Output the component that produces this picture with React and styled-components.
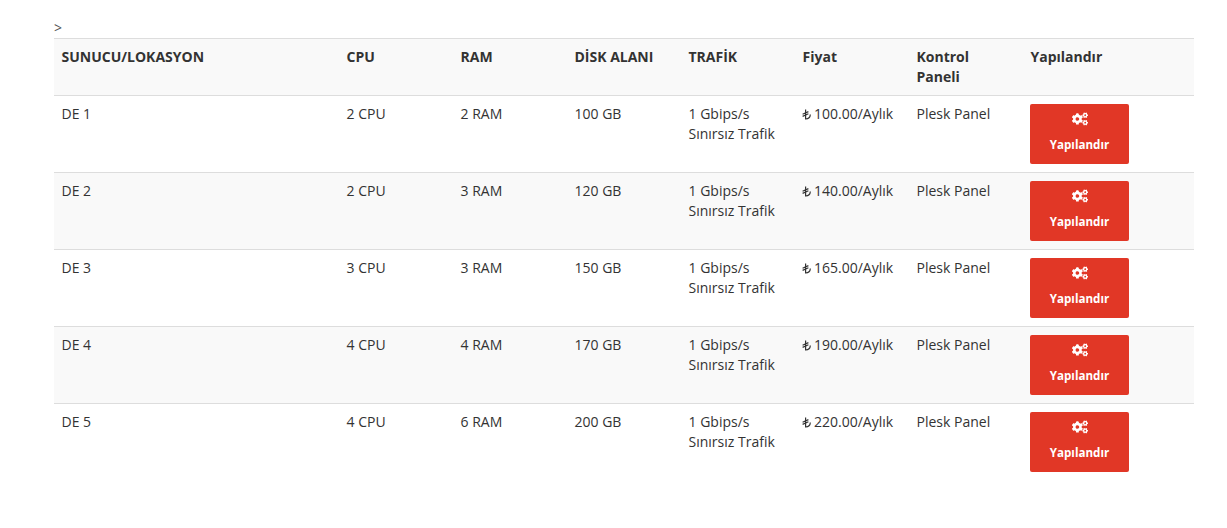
import React from 'react'
import styled, { createGlobalStyle } from 'styled-components'
import { FaCogs } from 'react-icons/fa'

const GlobalStyle = createGlobalStyle`
  html, body {
    margin: 0;
    background: #fff;
  }
  body {
    font-family: "Open Sans", "Liberation Sans", sans-serif;
    font-size: 14px;
    line-height: 20px;
    color: #333;
  }
`

const Page = styled.div`
  width: 1140px;
  margin-left: 54px;
  padding-top: 18px;
`

const Stray = styled.div`
  height: 20px;
  font-size: 14px;
  line-height: 20px;
  color: #555;
`

const Table = styled.table`
  width: 100%;
  table-layout: fixed;
  border-collapse: collapse;
  border-spacing: 0;
`

const HeadRow = styled.tr`
  background: #f9f9f9;
`

const Row = styled.tr`
  background: ${p => (p.$striped ? '#f9f9f9' : '#fff')};
`

const Th = styled.th`
  box-sizing: border-box;
  width: ${p => p.$width};
  padding: 8px 8px 8px 7.5px;
  border-top: 1px solid #ddd;
  text-align: left;
  vertical-align: top;
  font-weight: 700;
`

const Td = styled.td`
  box-sizing: border-box;
  padding: 8px 8px 8px 7.5px;
  border-top: 1px solid #ddd;
  vertical-align: top;
`

const LiraIcon = styled.svg`
  width: 9px;
  height: 11px;
  margin-left: -1px;
  margin-right: 3.5px;
  vertical-align: -1px;
  fill: none;
  stroke: currentColor;
  stroke-width: 1.2;
`

const ConfigButton = styled.a`
  display: flex;
  flex-direction: column;
  align-items: center;
  width: 99px;
  height: 60px;
  margin-left: -1px;
  padding: 8px 0 0 1px;
  box-sizing: border-box;
  background: #e13726;
  border-radius: 2px;
  color: #fff;
  font-size: 11.6px;
  font-weight: 700;
  line-height: 18px;
  text-decoration: none;
`

const CogsIcon = styled(FaCogs)`
  width: 16px;
  height: 14px;
  margin-bottom: 10px;
`

const columns = [
  { label: 'SUNUCU/LOKASYON', width: '25%' },
  { label: 'CPU', width: '10%' },
  { label: 'RAM', width: '10%' },
  { label: 'DİSK ALANI', width: '10%' },
  { label: 'TRAFİK', width: '10%' },
  { label: 'Fiyat', width: '10%' },
  { label: 'Kontrol Paneli', width: '10%' },
  { label: 'Yapılandır', width: '15%' },
]

const servers = [
  { name: 'DE 1', cpu: '2 CPU', ram: '2 RAM', disk: '100 GB', price: '100.00' },
  { name: 'DE 2', cpu: '2 CPU', ram: '3 RAM', disk: '120 GB', price: '140.00' },
  { name: 'DE 3', cpu: '3 CPU', ram: '3 RAM', disk: '150 GB', price: '165.00' },
  { name: 'DE 4', cpu: '4 CPU', ram: '4 RAM', disk: '170 GB', price: '190.00' },
  { name: 'DE 5', cpu: '4 CPU', ram: '6 RAM', disk: '200 GB', price: '220.00' },
]

const App = () => {
  return (
    <Page>
      <GlobalStyle />
      <Stray>&gt;</Stray>
      <Table>
        <thead>
          <HeadRow>
            {columns.map(col => (
              <Th key={col.label} $width={col.width}>{col.label}</Th>
            ))}
          </HeadRow>
        </thead>
        <tbody>
          {servers.map((server, i) => (
            <Row key={server.name} $striped={i % 2 === 1}>
              <Td>{server.name}</Td>
              <Td>{server.cpu}</Td>
              <Td>{server.ram}</Td>
              <Td>{server.disk}</Td>
              <Td>1 Gbips/s Sınırsız Trafik</Td>
              <Td>
                <LiraIcon viewBox="0 0 9 11">
                  <path d="M3.6 0.5V10C6.4 10 8.2 8.4 8.3 5.6M0.6 5.2L6.4 2.6M0.6 7.4L6.4 4.8" />
                </LiraIcon>
                {server.price}/Aylık
              </Td>
              <Td>Plesk Panel</Td>
              <Td>
                <ConfigButton href="#">
                  <CogsIcon />
                  Yapılandır
                </ConfigButton>
              </Td>
            </Row>
          ))}
        </tbody>
      </Table>
    </Page>
  )
}

export default App
